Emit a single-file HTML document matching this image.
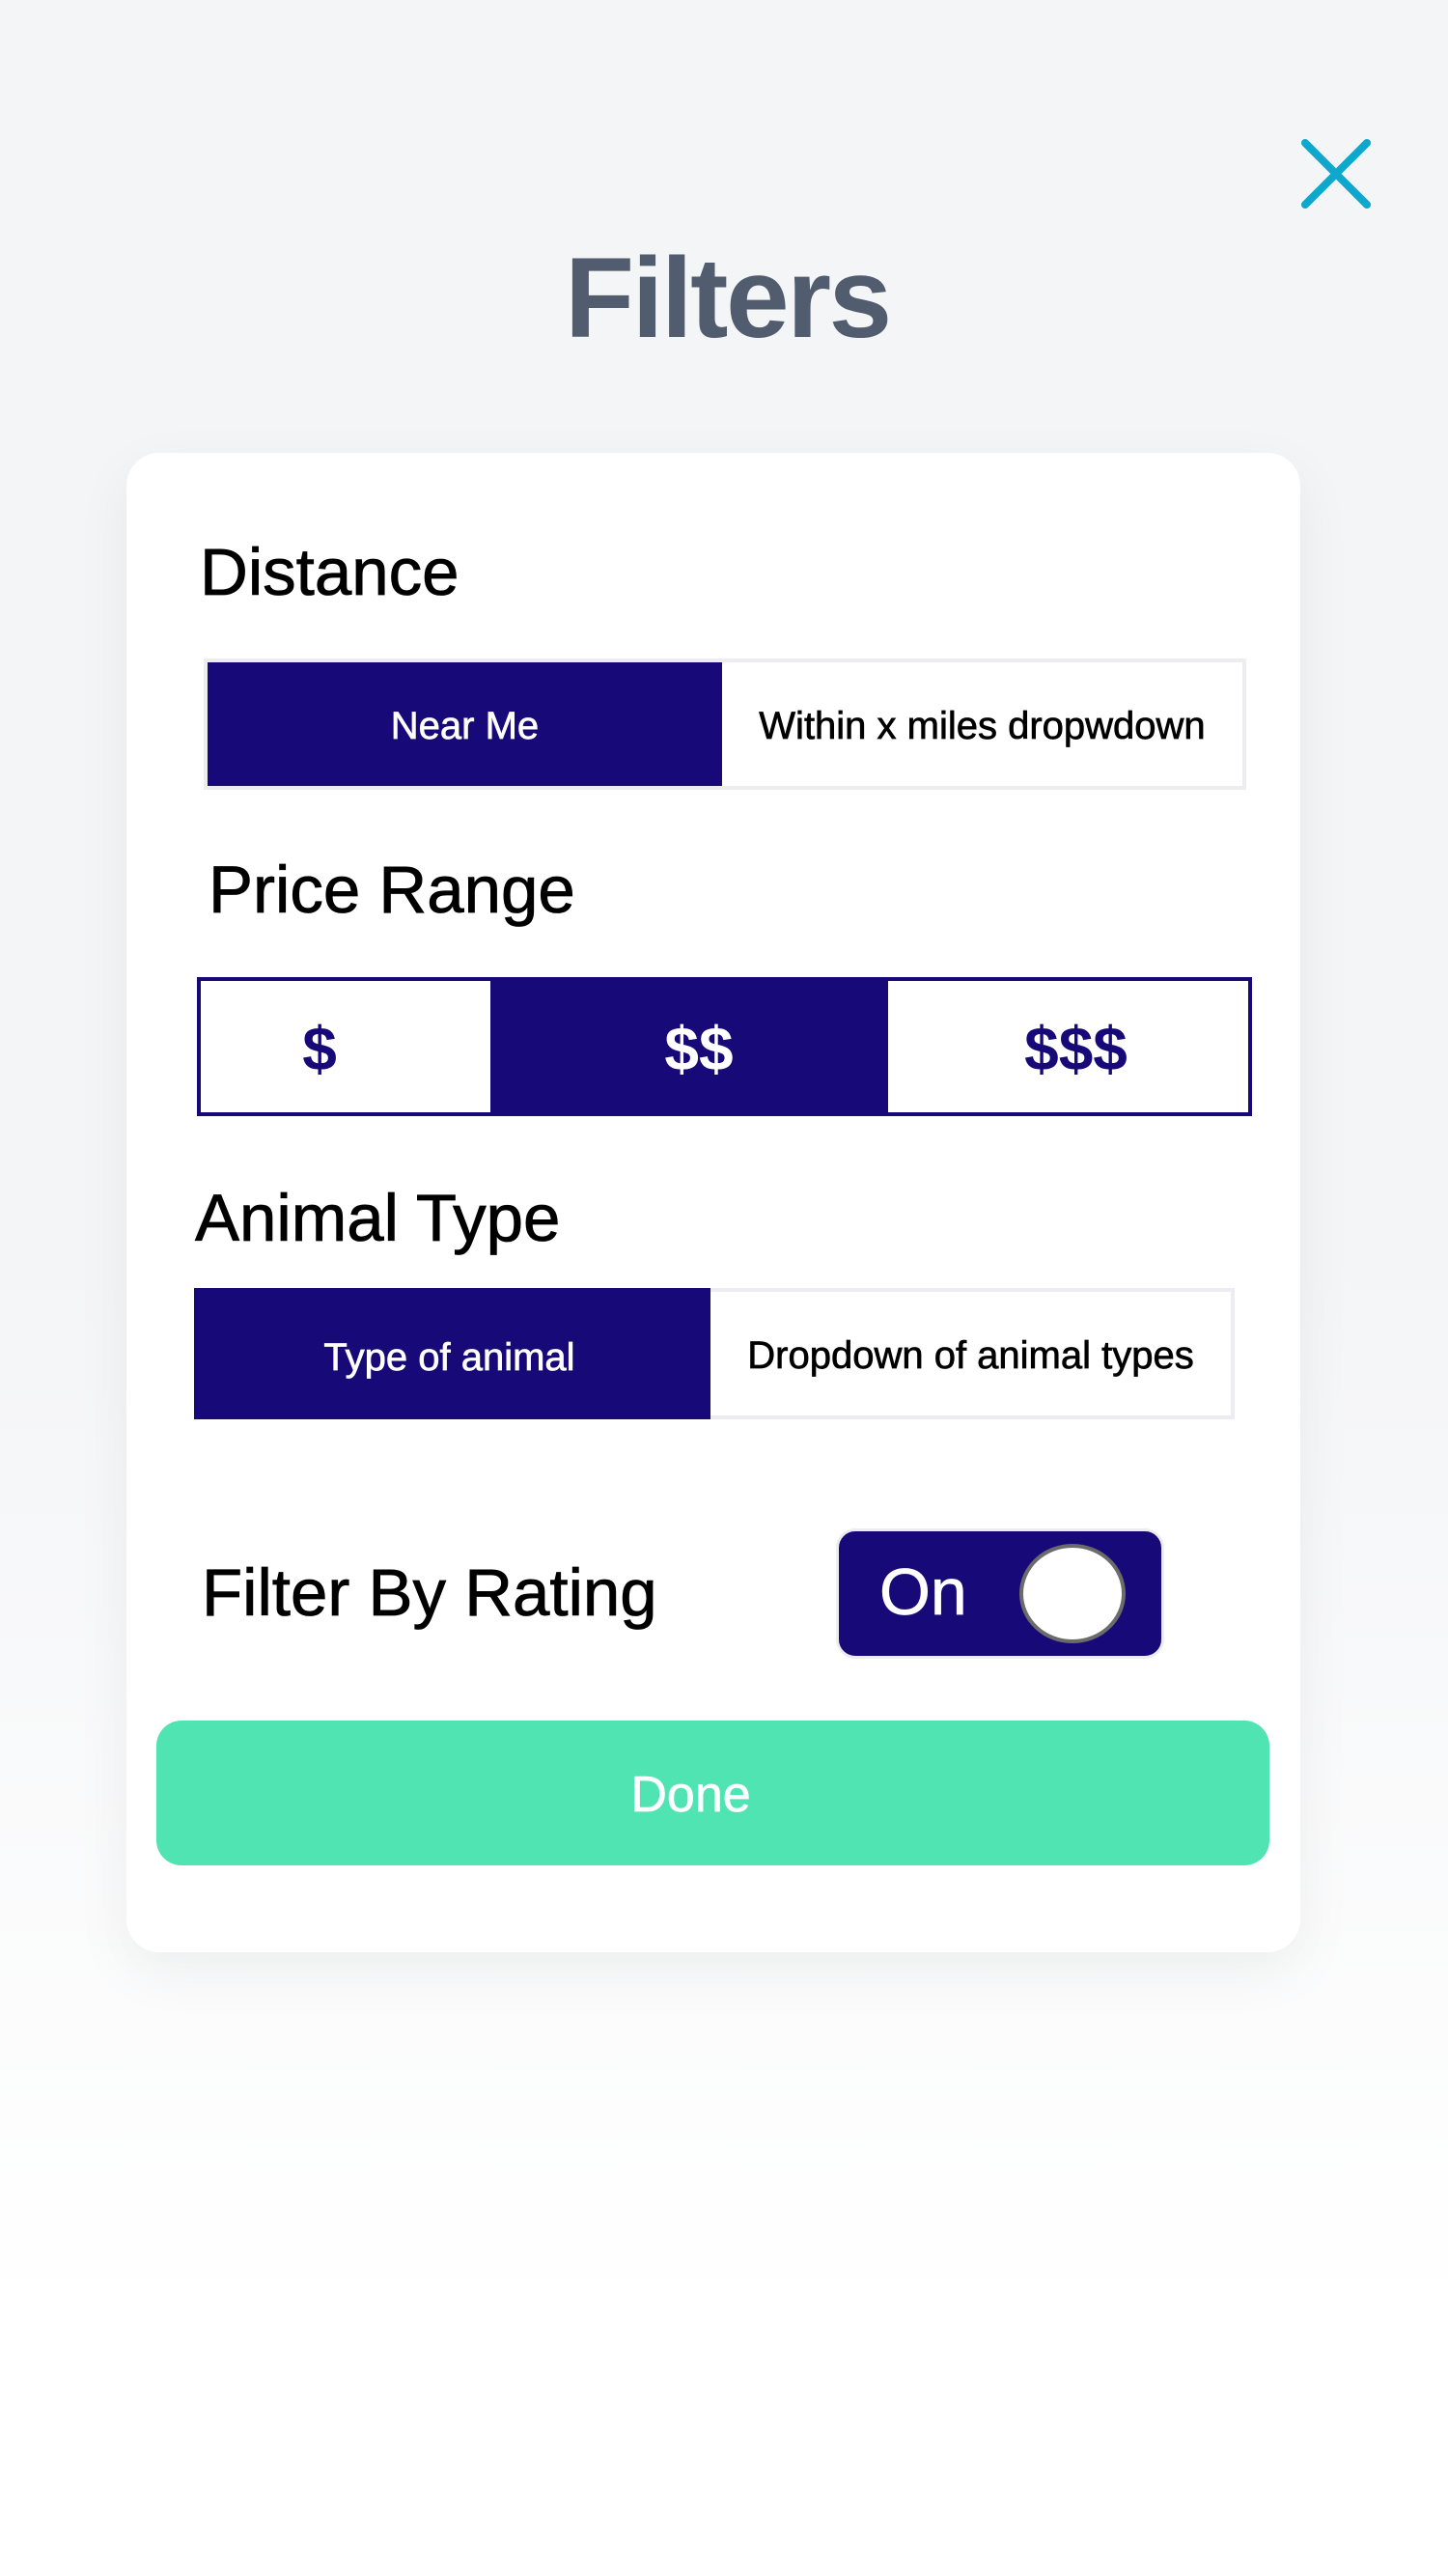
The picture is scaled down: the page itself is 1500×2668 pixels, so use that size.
<!DOCTYPE html>
<html><head><meta charset="utf-8"><style>
html,body{margin:0;padding:0}
body{width:1500px;height:2668px;position:relative;overflow:hidden;background:linear-gradient(#f4f5f7 0px,#f4f5f7 1300px,#ffffff 2400px);font-family:"Liberation Sans",sans-serif}
.a{position:absolute}
.card{left:131px;top:469px;width:1216px;height:1553px;background:#fff;border-radius:34px;box-shadow:0 20px 60px rgba(0,0,0,0.06)}
.h{color:#000;font-size:69px;line-height:1;white-space:nowrap;-webkit-text-stroke:0.8px #000}
.seg{display:flex;box-sizing:border-box}
.seg div{display:flex;align-items:center;justify-content:center;box-sizing:border-box;white-space:nowrap}
.nv{background:#170a78;color:#fff}
.m{-webkit-text-stroke:0.7px currentColor}
</style></head><body>
<svg class="a" style="left:1344px;top:140px" width="80" height="80" viewBox="0 0 80 80"><path d="M8 8 L72 72 M72 8 L8 72" stroke="#0da8cc" stroke-width="8" stroke-linecap="round"/></svg>
<div class="a" style="left:585px;top:245px;font-size:118px;font-weight:bold;color:#515c6e;letter-spacing:-2.5px;line-height:1.1">Filters</div>
<div class="a card"></div>
<div class="a h" style="left:207px;top:558px">Distance</div>
<div class="a seg" style="left:211px;top:682px;width:1080px;height:136px;border:4px solid #ececf1">
 <div class="nv m" style="width:533px;font-size:40px;padding-top:4px">Near Me</div>
 <div class="m" style="flex:1;font-size:40px;color:#000;padding-top:4px">Within x miles dropwdown</div>
</div>
<div class="a h" style="left:216px;top:887px">Price Range</div>
<div class="a seg" style="left:204px;top:1012px;width:1093px;height:144px;border:4px solid #170a78;font-weight:bold;font-size:64px">
 <div style="width:300px;color:#170a78;padding-right:54px;padding-top:4px">$</div>
 <div class="nv" style="width:412px;padding-left:20px;padding-top:4px">$$</div>
 <div style="flex:1;color:#170a78;padding-left:16px;padding-top:4px">$$$</div>
</div>
<div class="a h" style="left:202px;top:1227px">Animal Type</div>
<div class="a seg" style="left:201px;top:1334px;width:1078px;height:136px;border:4px solid #ececf1">
 <div class="nv m" style="width:535px;font-size:40px;margin:-4px 0 -4px -4px;height:136px;padding-top:8px;padding-right:6px">Type of animal</div>
 <div class="m" style="flex:1;font-size:40px;color:#000;padding-top:4px">Dropdown of animal types</div>
</div>
<div class="a h" style="left:209px;top:1615px">Filter By Rating</div>
<div class="a" style="left:866px;top:1583px;width:340px;height:135px;box-sizing:border-box;border:3px solid #ececf1;border-radius:20px;background:#170a78"></div>
<div class="a m" style="left:911px;top:1615px;font-size:68px;color:#fff;line-height:1">On</div>
<div class="a" style="left:1056px;top:1599px;width:110px;height:103px;box-sizing:border-box;border:4px solid #6b6b6b;border-radius:50%;background:#fff"></div>
<div class="a m" style="left:162px;top:1782px;width:1153px;height:150px;background:#4fe4b2;border-radius:26px;display:flex;align-items:center;justify-content:center;color:#fff;font-size:52px;padding-right:46px;padding-top:4px;box-sizing:border-box">Done</div>
</body></html>
